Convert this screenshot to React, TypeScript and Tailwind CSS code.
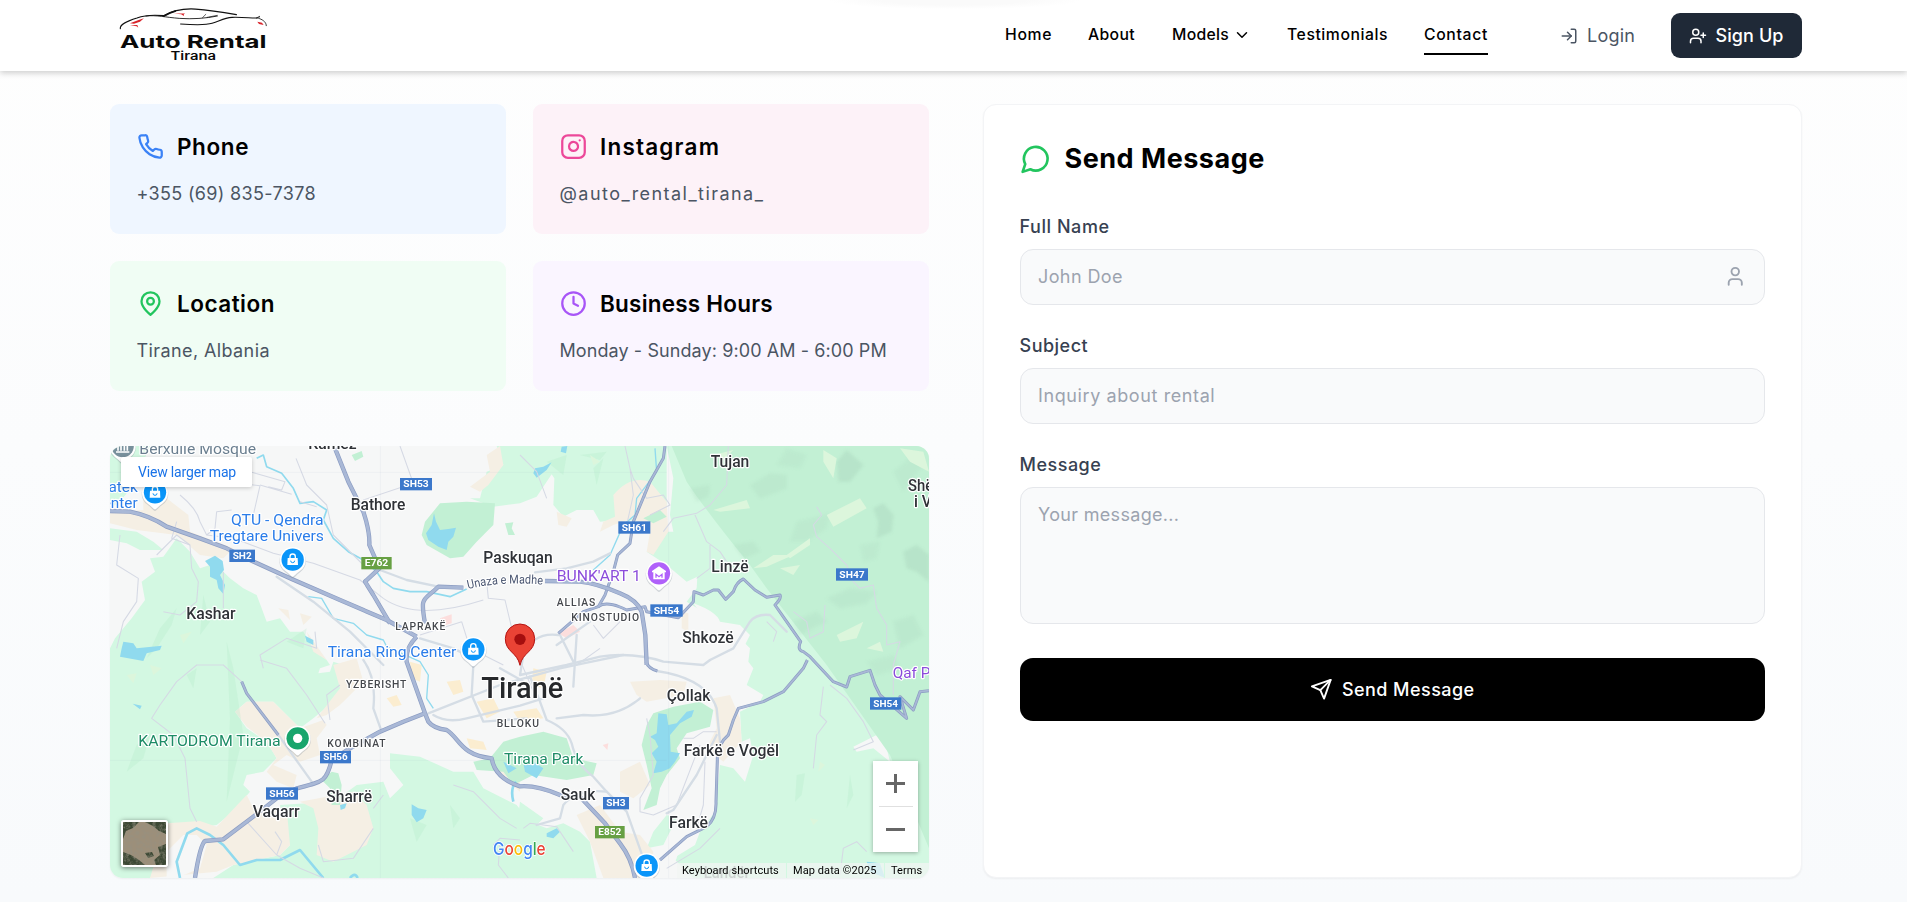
import React from "react";
import { ChevronDown, Clock, Instagram, LogIn, User, UserPlus } from "lucide-react";

type IconProps = { className?: string };

const Stroke = ({ className, children }: IconProps & { children: React.ReactNode }) => (
  <svg viewBox="0 0 24 24" fill="none" stroke="currentColor" strokeWidth="2" strokeLinecap="round" strokeLinejoin="round" className={className}>
    {children}
  </svg>
);

const PhoneIcon = ({ className }: IconProps) => (
  <Stroke className={className}>
    <path d="M22 16.92v3a2 2 0 0 1-2.18 2 19.79 19.79 0 0 1-8.63-3.07 19.5 19.5 0 0 1-6-6 19.79 19.79 0 0 1-3.07-8.67A2 2 0 0 1 4.11 2h3a2 2 0 0 1 2 1.72 12.84 12.84 0 0 0 .7 2.81 2 2 0 0 1-.45 2.11L8.09 9.91a16 16 0 0 0 6 6l1.27-1.27a2 2 0 0 1 2.11-.45 12.84 12.84 0 0 0 2.81.7A2 2 0 0 1 22 16.92z" />
  </Stroke>
);
const PinIcon = ({ className }: IconProps) => (
  <Stroke className={className}>
    <path d="M20 10c0 6-8 12-8 12s-8-6-8-12a8 8 0 0 1 16 0Z" />
    <circle cx="12" cy="10" r="3" />
  </Stroke>
);
const ChatIcon = ({ className }: IconProps) => (
  <Stroke className={className}>
    <path d="M7.9 20A9 9 0 1 0 4 16.1L2 22Z" />
  </Stroke>
);
const SendIcon = ({ className }: IconProps) => (
  <Stroke className={className}>
    <path d="m22 2-7 20-4-9-9-4Z" />
    <path d="M22 2 11 13" />
  </Stroke>
);

const Logo = () => (
  <svg viewBox="0 0 400 180" className="h-[60px] w-[133px] shrink-0 self-start overflow-visible">
    <g transform="translate(-90 0)" fill="none" stroke="#111" strokeLinecap="round">
      <path d="M91 86c-2-14 22-23 50-32 22-8 40-11 80-7" strokeWidth="3.5" />
      <path d="M168 48c30-4 60 4 100 7 40 3 80 0 115-7" strokeWidth="2.6" />
      <path d="M222 47c30-18 60-22 95-20 45 3 85 10 123 17" strokeWidth="3.8" />
      <path d="M222 48c12-7 22-12 34-15" strokeWidth="5.5" />
      <path d="M272 72c45 3 75 4 95-2 25-8 35-17 60-18 35-1 60 3 82 2" strokeWidth="3.2" />
      <path d="M338 53l10-10M352 52l30-6" strokeWidth="2" />
      <path d="M500 54l10-5M510 56c12 4 20 12 20 21" strokeWidth="2.5" />
    </g>
    <g transform="translate(-90 0)" fill="#d8232a">
      <path d="M120 70l26-10 16-5-12 10-18 6z" />
      <path d="M120 76l22-1 3 8-5-4z" />
      <path d="M252 40l34 0-4 3 0 5-8-5z" />
      <path d="M503 65l14 3 5 7-14-3z" />
    </g>
    <text x="0" y="144" textLength="441" lengthAdjust="spacingAndGlyphs" fontFamily="Inter, sans-serif" fontWeight="700" fontSize="54" fill="#0a0a0a">Auto Rental</text>
    <text x="152" y="180" textLength="137" lengthAdjust="spacingAndGlyphs" fontFamily="Inter, sans-serif" fontWeight="600" fontSize="34" fill="#0a0a0a">Tirana</text>
  </svg>
);

const majorRoads = [
  "M30 228L90 230Q150 242 200 275L300 310L380 340L450 375L575 432L720 495L860 555L950 605",
  "M705 40L745 140L790 230Q810 290 808 330L832 385L838 400L795 440L820 480L870 565",
  "M950 605Q915 640 920 680L975 835L985 860Q1000 880 1040 885C1080 910 1080 960 1175 970Q1185 1030 1260 1054Q1310 1050 1380 1080L1440 1085L1515 1165L1560 1225Q1595 1270 1605 1329",
  "M975 835L910 860L840 890L750 940L695 975C680 1040 670 1040 590 1060L530 1090L460 1145L370 1213L315 1218Q300 1230 285 1329",
  "M975 565C960 480 970 500 1015 455L1090 458M1335 438L1440 440Q1490 445 1560 475Q1610 495 1625 530L1636 600L1640 690",
];
const midRoads = [
  "M1695 33L1690 70L1650 140L1600 260L1590 325L1553 360L1540 410L1515 480L1495 515L1450 530L1375 595",
  "M1495 515Q1520 495 1580 525L1635 515L1640 530L1735 548L1780 500L1782 470L1810 480L1840 465L1855 465L1877 493L1900 470Q1910 440 1930 432L1965 465L2000 487L2040 480Q2045 490 2025 510L2060 560L2102 620Q2090 645 2110 650L2130 665L2200 740L2240 756L2250 725L2310 706L2325 750L2340 780L2420 850L2400 785L2440 825L2460 770L2487 767",
  "M1680 1275L1760 1205L1820 1175Q1850 1150 1848 1100L1852 975Q1850 930 1885 900L1900 855L1915 820L1990 800L2050 770L2110 700L2122 675",
  "M425 740L440 775L535 900",
  "M1638 680Q1645 700 1672 708",
];
const arterials = [
  "M1670 708Q1820 730 1850 820L1860 920",
  "M985 835L1200 750L1290 725L1320 800L1340 855Q1400 880 1415 925Q1430 990 1480 1025L1520 1070L1580 1130L1630 1270",
  "M1000 840Q1040 865 1100 850L1260 812L1330 790",
  "M1375 600Q1300 590 1270 660L1260 720L1400 690L1500 665Q1600 650 1690 680L1810 690L1830 675",
  "M1290 725L1380 700L1450 685L1570 660M1380 600L1425 690M1430 600L1420 755M1370 630L1470 560",
  "M1120 690L1115 780L1150 860L1280 850M1200 700L1280 745",
  "M790 675Q830 730 820 820L845 890",
  "M840 405L920 435L1015 455M535 900L635 1040",
  "M1305 412L1400 400L1480 380L1530 355",
  "M530 425L640 500L750 590L850 690",
  "M1620 790Q1550 850 1450 840L1370 850M1520 1070Q1430 1060 1390 1110L1380 1150L1310 1170M960 610L1060 640L1120 670",
  "M1700 1135L1720 1125L1790 1020L1850 900M1830 675L1900 640L1950 560Q1970 535 2010 540L2060 590",
];
const minorRoads = [
  "M588 70L620 150L680 210L700 300L790 390M380 140L480 152L460 240",
  "M790 195L940 145L900 33M480 150L575 178M600 200L650 215M450 110L555 140L545 165L505 155",
  "M240 180Q290 220 300 260L320 300L345 280L350 230L395 225M320 300L400 310L520 355L640 385L780 435L850 490Q950 560 1150 495",
  "M60 300L50 390L115 430L110 500L70 560L50 640M170 360L230 300L270 330L275 400L295 440L290 500L240 540L190 530",
  "M370 410L370 520M230 260L215 310L270 330M645 590L650 640L560 610L480 660L490 700",
  "M425 740L370 690L290 690L230 740L180 810L155 850L220 900L255 970L270 1120L290 1160",
  "M480 675L560 700L620 780L675 865M690 855L680 780L720 750",
  "M440 1160L530 1260L600 1300L670 1329M525 1190L545 1220L530 1260M820 1180L760 1270L670 1280L655 1230",
  "M1160 440L1165 490L1215 495L1240 600M1085 560L1110 640L1210 690M960 600L1085 560",
  "M1575 33L1590 100L1600 180L1580 270M1590 100L1600 130L1640 190L1690 180L1710 210L1650 240",
  "M1885 33L1880 150L1830 210L1790 235L1720 250L1690 290M1785 240L1820 320L1860 350L1900 410M1260 60L1310 110L1340 190M1830 330L1830 400L1790 430",
  "M1500 640L1430 690M1480 570L1510 610L1570 550M1260 675L1300 770M1060 1050L1120 1070L1200 1150L1250 1180",
  "M1750 910L1780 910L1810 890L1850 890M1800 930L1780 980L1730 1110L1660 1140L1620 1130L1620 1090L1660 1020L1650 900L1640 850",
  "M1815 980L1810 1110L1790 1180M1860 1180L1800 1240L1700 1300M2000 560L2030 590L2020 620M2130 610L2120 560L2080 530M2130 610L2170 590L2175 510",
  "M2150 215L2165 240L2140 270L2150 305L2190 340L2240 390L2260 440L2280 460L2320 450L2330 520L2360 570L2360 630L2400 620L2380 690L2380 780",
  "M2170 755L2160 840L2180 860L2150 900L2140 1000M2190 750L2240 790L2290 860L2320 920L2260 945M2220 1320L2230 1240L2270 1220L2300 1250",
  "M1270 1180L1290 1165L1370 1175L1420 1250M1200 1220L1195 1290L1225 1329M1180 1230L1200 1210L1260 1215M850 1080L820 1120",
];

const textHalo = { paintOrder: "stroke" as const, stroke: "#ffffff", strokeWidth: 7, strokeLinejoin: "round" as const };

type Place = [string, number, number, number];
const towns: Place[] = [
  ["Kamëz", 625, 41, 145], ["Bathore", 752, 226, 164], ["Kashar", 259, 553, 148], ["Paskuqan", 1150, 384, 208],
  ["Tujan", 1832, 95, 116], ["Linzë", 1834, 410, 112], ["Shkozë", 1747, 623, 154], ["Shënmëri", 2424, 168, 190],
  ["i Vogël", 2442, 215, 140], ["Çollak", 1700, 798, 131], ["Farkë e Vogël", 1751, 962, 286], ["Farkë", 1707, 1179, 117],
  ["Sauk", 1382, 1094, 104], ["Sharrë", 679, 1102, 137], ["Vaqarr", 458, 1145, 141],
];
const quarters: Place[] = [
  ["LAPRAKË", 886, 584, 150], ["ALLIAS", 1370, 513, 116], ["KINOSTUDIO", 1414, 559, 203],
  ["YZBERISHT", 738, 759, 181], ["KOMBINAT", 682, 935, 175], ["BLLOKU", 1190, 877, 127],
];
const shields: [string, number, number, number, string][] = [
  ["SH53", 900, 129, 96, "#3b78cb"], ["SH2", 388, 344, 77, "#3b78cb"], ["E762", 784, 366, 91, "#67a043"],
  ["SH61", 1555, 259, 96, "#3b78cb"], ["SH47", 2208, 400, 96, "#3b78cb"], ["SH54", 1651, 508, 97, "#3b78cb"],
  ["SH54", 2310, 787, 94, "#3b78cb"], ["SH56", 660, 948, 93, "#3b78cb"], ["SH56", 498, 1057, 96, "#3b78cb"],
  ["SH3", 1509, 1086, 78, "#3b78cb"], ["E852", 1485, 1173, 89, "#67a043"],
];
const shops: [number, number][] = [[165, 172], [578, 374], [1120, 643], [1640, 1292]];

const Teardrop = ({ x, y, color, children }: { x: number; y: number; color: string; children?: React.ReactNode }) => (
  <g transform={`translate(${x} ${y})`}>
    <path d="M0 53C-5 53-11 42-24 33A40 40 0 1 1 24 33C11 42 5 53 0 53Z" fill="#8a94a0" opacity=".35" transform="translate(0 3)" />
    <path d="M0 51C-5 51-11 41-24 32A39 39 0 1 1 24 32C11 41 5 51 0 51Z" fill="#fff" />
    <circle r="33.5" fill={color} />
    {children}
  </g>
);

const MapDrawing = () => (
  <svg viewBox="30 33 2457 1296" className="block h-full w-full" fontFamily="Roboto, sans-serif">
    <rect x="0" y="0" width="2500" height="1340" fill="#f6f7f7" />
    <g fill="#d3f8e2">
      <path d="M30 640L45 610L95 550L135 495L125 440L165 410L150 370L190 365L230 310L270 350L300 400L330 390L370 410L390 430L430 460L470 480L485 520L500 560L540 550L570 590L610 590L640 640L680 675L690 690L660 700L655 715L690 710L700 680L760 700L770 740L700 800L640 850L600 880L520 800L440 800L405 830L440 880L500 920L530 970L490 1010L440 1020L430 1050L450 1070L400 1130L350 1170L290 1180L150 1329L30 1329Z" />
      <path d="M30 33H150L100 150L60 200L30 220ZM30 280L110 290L160 320L190 345L120 345L80 325L30 315Z" />
      <path d="M1190 33L1210 90L1160 110L1140 190L1110 190L1180 215L1260 205L1310 185L1355 118L1363 130L1360 210L1390 245L1430 225L1480 225L1500 260L1560 255L1700 260L1700 33Z" />
      <path d="M1700 33L1720 130L1710 240L1720 290L1690 290L1640 350L1700 390L1760 440L1792 425L1790 460L1760 500L1850 555L1860 600L1930 620L1950 640L1945 680L1960 700L1940 750L1990 780L1980 800L1920 830L1925 920L1950 910L1960 960L1935 1040L1900 1000L1860 990L1845 1130L1800 1190L1785 1230L1720 1270L1780 1329H2487V33Z" />
      <path d="M870 955L960 965L1060 1010L1120 1010L1150 1060L1250 1110L1290 1160L1340 1180L1390 1165L1440 1190L1470 1220L1490 1329L340 1329L400 1290L540 1260L570 1230L550 1170L540 1110L620 1105L660 1130L770 1050L850 1040L870 1090L910 1050L870 1000Z" />
      <path d="M1660 1190L1700 1140L1730 1150L1690 1230L1640 1240ZM1260 1100L1330 1150L1290 1190L1250 1180Z" />
    </g>
    <path d="M1780 505Q1850 530 1860 560L1920 570L1950 600L1930 640L1860 610L1820 560ZM2260 935L2330 900L2360 940L2370 980L2320 940L2270 950ZM1680 1240L1740 1225L1730 1270L1700 1329H1650Z" fill="#f6f7f7" />
    <g fill="#f5efe4">
      <path d="M130 150L200 190L265 240L270 290L400 340L370 370L300 360L230 300L110 285L30 265L30 235L130 225Z" />
      <path d="M520 800L440 800L405 830L440 875L500 920L530 970L500 1010L530 1040L580 1060L590 1020L520 990L560 960L600 980L660 960L650 910L680 870L670 855L600 880Z" />
      <path d="M200 1165L300 1158L350 1175L440 1080L460 1120L560 1120L570 1230L540 1260L400 1290L350 1310L150 1329Z" />
      <path d="M600 1100L760 1070L800 1110L820 1180L800 1230L700 1280L650 1260L655 1180L640 1120Z" />
      <path d="M1540 180Q1590 120 1650 140L1700 200L1705 290L1660 360L1640 350L1650 290L1600 250L1540 270L1500 290L1510 260L1545 245ZM1370 230L1415 250L1400 275L1375 270Z" />
      <path d="M1110 155L1170 110L1160 60L1200 33L1210 90L1165 150L1140 170ZM535 520L565 525L570 555ZM600 535L635 545L610 570ZM620 590L680 675L640 650Z" />
      <path d="M1590 740L1680 735L1760 740L1750 780L1640 800L1610 780ZM1840 790L1890 780L1920 850L1925 920L1870 980L1820 940L1850 880Z" />
      <path d="M1560 1010L1620 980L1650 1050L1600 1090L1560 1070ZM1430 1140L1500 1110L1560 1190L1620 1200L1660 1250L1650 1329H1510L1470 1220ZM1745 530L1765 535L1765 590L1745 580Z" />
      <path d="M700 690L770 670L790 740L720 810L680 840L650 850L720 760ZM1180 960L1260 1000L1260 1070L1200 1020Z" />
    </g>
    <path d="M200 1250L250 1200L290 1200L320 1230L300 1300L230 1329H200Z" fill="#f6f7f7" />
    <g fill="#fbedd0">
      <path d="M1040 740L1080 735L1090 770L1060 780ZM1130 800L1180 790L1200 830L1160 850ZM1100 910L1150 920L1160 945L1110 940ZM1300 700L1340 710L1330 760L1295 750ZM860 790L890 780L905 810L880 815ZM930 680L965 690L960 740L935 730ZM1240 830L1310 820L1330 850L1260 860Z" />
    </g>
    <g fill="#fcdedd">
      <path d="M1020 550L1055 538L1055 565L1030 572ZM1375 595L1420 570L1440 590L1400 610ZM1508 930L1525 925L1522 945Z" />
    </g>
    <g fill="#c2f0d4">
      <path d="M1715 33L1760 140Q1820 230 1950 390L2000 460L2180 690L2370 960L2487 1240V33Z" />
      <path d="M975 260L1020 205L1100 200L1185 205L1180 270L1130 320L1090 365L1050 370L980 330L965 300ZM755 60L785 48L790 65L765 78ZM1215 265L1240 262L1235 280L1245 300L1225 300Z" />
      <path d="M1660 835L1720 815L1800 800L1840 825L1830 875L1760 895L1730 940L1740 970L1700 1020L1680 1060L1670 1110L1630 1125L1655 1060L1640 990L1625 930L1640 870Z" />
      <path d="M1120 980L1170 970L1210 920L1260 905L1330 890L1400 910L1420 970L1490 985L1480 1020L1400 1035L1300 1020L1240 1050L1210 1010L1130 1005Z" />
      <path d="M665 1035L695 1010L715 1015L725 1050L720 1110L695 1110L690 1060ZM1630 250L1680 225L1700 245L1660 265Z" />
    </g>
    <g fill="#b0dcc3" opacity=".6" style={{ filter: "blur(4px)" }}>
      <path d="M2210 80L2240 45L2290 90L2250 140L2215 140ZM2320 220L2350 205L2380 240L2375 290L2330 310L2335 260ZM2410 350L2450 330L2487 360L2487 440L2450 410L2420 400Z" />
      <path d="M1900 330L1960 320L1980 350L1930 370ZM1770 160L1830 150L1825 185L1790 200ZM1950 150L2010 115L2060 120L2060 160L1980 190Z" opacity=".55" />
      <path d="M2080 560L2150 530L2180 560L2100 600ZM2180 490L2250 460L2330 470L2300 505L2220 520ZM2380 560L2440 540L2470 600L2400 640Z" opacity=".5" />
      <path d="M2090 260L2190 235L2180 280L2120 320L2070 320ZM2060 40L2120 60L2100 100L2030 90ZM2300 680L2380 660L2400 700L2330 720ZM2380 110L2440 60L2470 90L2410 170ZM2280 330L2340 320L2330 370L2290 380Z" opacity=".4" />
    </g>
    <g fill="#aee8c6" opacity=".26">
      <path d="M230 520L215 570L170 640L140 670L180 580ZM380 620L400 700L430 900L405 1000L380 1100L390 850ZM150 900L130 970L80 1010L110 930ZM310 480L330 560L300 600ZM560 620L620 580L610 640ZM260 720L290 700L280 760Z" />
      <path d="M1340 80L1400 60L1390 120ZM1480 100L1510 70L1490 150ZM2090 1020L2115 1015L2105 1080L2085 1100ZM2250 1020L2260 1080L2240 1120ZM1440 60L1520 50L1500 75ZM930 1150L980 1170L950 1220ZM1050 1110L1080 1150L1060 1180Z" />
    </g>
    <g fill="#dcf6dc" style={{ filter: "blur(1px)" }}>
      <path d="M2170 45L2210 70L2200 130L2170 80ZM1840 225L1940 195L1950 220L1860 230ZM1960 400L2020 360L2080 360L2000 395ZM2180 240L2280 190L2300 220L2200 275ZM2060 360L2130 310L2130 330L2070 370ZM2210 600L2290 560L2270 610L2220 620ZM1840 60L1900 45L1870 75ZM2300 640L2340 620L2350 650ZM2400 40L2470 50L2487 110L2430 80ZM2040 400L2100 390L2080 420Z" />
      <path d="M150 690L185 700L160 720ZM80 720L110 715L100 745ZM2130 1150L2155 1155L2140 1170ZM2160 980L2175 990L2155 1010ZM1470 60L1500 80L1480 90ZM240 600L275 590L250 625Z" />
    </g>
    <g fill="#90daee">
      <path d="M1002 235L1008 260L1020 285L1045 282L1068 278L1060 305L1045 320L1040 345L1015 335L985 315L978 295L995 270Z" />
      <path d="M315 378L345 362L368 378L372 405L360 420L375 450L370 477L355 460L350 435L330 425L330 395Z" />
      <path d="M70 620L100 625L110 640L185 632L180 645L140 655L130 678L60 665L65 640ZM615 602L640 615L640 630L620 620ZM98 806L125 812L120 823Z" />
      <path d="M1305 100L1330 95L1355 82L1340 105L1310 128L1300 115ZM1385 35L1402 33L1398 55L1382 50Z" />
      <path d="M1675 835L1700 838L1705 870L1730 865L1760 830L1782 825L1775 845L1740 865L1710 900L1712 950L1740 955L1725 980L1710 1000L1685 1010L1660 1015L1670 980L1655 955L1675 935L1665 915L1650 905L1670 895Z" />
      <path d="M935 1108L955 1120L980 1125L970 1150L950 1162L935 1140ZM720 1110L740 1105L735 1120L722 1125ZM1340 1195L1370 1180L1380 1190L1360 1210L1340 1205ZM1270 985L1300 980L1330 1000L1310 1030L1275 1010ZM1210 980L1250 1000L1225 1015ZM2300 1280L2340 1285L2355 1329L2310 1310Z" />
    </g>
    <g fill="none" stroke="#90daee" strokeLinejoin="round">
      <path d="M470 70L490 60L500 95L545 115L580 160L600 205L640 200L680 225L670 255L700 310L745 350L790 375L830 410L850 440L880 460L930 470L980 470L1050 485L1100 462" strokeWidth="5" />
      <path d="M625 485L665 490L700 550L760 565L800 600L850 615L860 635L960 680L985 720L980 790L1000 820" strokeWidth="4" />
      <path d="M1665 40L1670 110L1610 190L1605 240L1570 270L1530 360L1480 405" strokeWidth="4" />
      <path d="M240 1329L230 1280L262 1195L290 1180L330 1200L370 1230L420 1290L470 1275L540 1275L600 1245L670 1329" strokeWidth="8" />
      <path d="M750 1329Q765 1310 773 1329M1248 1040Q1230 1060 1240 1100" strokeWidth="8" />
    </g>
    <g fill="none" stroke="#d5d9e4" strokeWidth="3.2" strokeLinejoin="round">
      {minorRoads.map((d) => <path key={d} d={d} />)}
    </g>
    <g fill="none" stroke="#d5dde5" strokeWidth="7" strokeLinejoin="round" strokeLinecap="round">
      {arterials.map((d) => <path key={d} d={d} />)}
    </g>
    <g fill="none" stroke="#8b9cc2" strokeWidth="9" strokeLinejoin="round">
      {midRoads.map((d) => <path key={d} d={d} />)}
    </g>
    <g fill="none" stroke="#a9b8d6" strokeWidth="5" strokeLinejoin="round">
      {midRoads.map((d) => <path key={d} d={d} />)}
    </g>
    <g fill="none" stroke="#8b9cc2" strokeWidth="13" strokeLinejoin="round">
      {majorRoads.map((d) => <path key={d} d={d} />)}
    </g>
    <g fill="none" stroke="#a9b8d6" strokeWidth="9" strokeLinejoin="round">
      {majorRoads.map((d) => <path key={d} d={d} />)}
    </g>
    <g stroke="#7f8fa8" strokeOpacity=".06" strokeWidth="3">
      <path d="M841 33V1329M1706 33V1329M30 112H1700M30 976H1700" />
    </g>

    {shields.map(([label, x, y, w, color]) => (
      <g key={label + x}>
        <rect x={x} y={y} width={w} height="37" fill={color} />
        <text x={x + 10} y={y + 28} textLength={w - 20} lengthAdjust="spacingAndGlyphs" fontSize="28" fontWeight="700" fill="#fff">{label}</text>
      </g>
    ))}
    <g fontSize="47" fontWeight="500" fill="#2f3237" style={textHalo}>
      {towns.map(([label, x, y, w]) => (
        <text key={label} x={x} y={y} textLength={w} lengthAdjust="spacingAndGlyphs">{label}</text>
      ))}
    </g>
    <g fontSize="31" fontWeight="500" fill="#45484d" style={textHalo}>
      {quarters.map(([label, x, y, w]) => (
        <text key={label} x={x} y={y} textLength={w} lengthAdjust="spacing">{label}</text>
      ))}
    </g>
    <path id="ring-road" d="M1104 462Q1200 438 1332 449" fill="none" />
    <text fontSize="37" fill="#4a5671" style={textHalo}>
      <textPath href="#ring-road" textLength="226" lengthAdjust="spacingAndGlyphs">Unaza e Madhe</textPath>
    </text>
    <text x="1811" y="1329" fontSize="47" fontWeight="500" fill="#666a6f" textLength="138" lengthAdjust="spacingAndGlyphs">Lundër</text>

    <g fontSize="46" fill="#2b7de9" style={textHalo}>
      <text x="393" y="271" textLength="278" lengthAdjust="spacingAndGlyphs">QTU - Qendra</text>
      <text x="329" y="317" textLength="343" lengthAdjust="spacingAndGlyphs">Tregtare Univers</text>
      <text x="683" y="667" textLength="386" lengthAdjust="spacingAndGlyphs">Tirana Ring Center</text>
      <text x="113" y="172" textAnchor="end">Jysk Patek</text>
      <text x="113" y="220" textAnchor="end">Center</text>
    </g>
    <g fontSize="46" style={textHalo}>
      <text x="118" y="57" textLength="350" lengthAdjust="spacingAndGlyphs" fill="#6b7f90">Berxulle Mosque</text>
      <text x="1370" y="438" textLength="253" lengthAdjust="spacingAndGlyphs" fill="#8b4cdb">BUNK'ART 1</text>
      <text x="2378" y="730" fill="#8b4cdb">Qaf Priska</text>
      <text x="115" y="933" textLength="427" lengthAdjust="spacingAndGlyphs" fill="#1d8c66">KARTODROM Tirana</text>
      <text x="1212" y="986" textLength="238" lengthAdjust="spacingAndGlyphs" fill="#1d8c66">Tirana Park</text>
    </g>
    <text x="1144" y="789" fontSize="86" fontWeight="500" fill="#26282b" textLength="246" lengthAdjust="spacingAndGlyphs" style={textHalo}>Tiranë</text>

    <Teardrop x={68} y={33} color="#78909c">
      <path d="M-20 18H20M-14 -6V14M-5 -6V14M5 -6V14M14 -6V14" stroke="#fff" strokeWidth="5" />
    </Teardrop>
    {shops.map(([x, y]) => (
      <Teardrop key={x} x={x} y={y} color="#0a95f9">
        <path d="M-15-5H15L16 16H-16Z" fill="#fff" />
        <path d="M-8-4V-9a8 8 0 0 1 16 0V-4" fill="none" stroke="#fff" strokeWidth="4" />
        <path d="M-6 3a6 6 0 0 0 12 0" fill="none" stroke="#0a95f9" strokeWidth="3" />
      </Teardrop>
    ))}
    <Teardrop x={1677} y={415} color="#b061fa">
      <path d="M-21-7L0-21L21-7V-3H-21ZM-17-3H17V18H-17Z" fill="#fff" />
      <path d="M-9 13V3L0 10L9 3V13" fill="none" stroke="#b061fa" strokeWidth="4" />
    </Teardrop>
    <Teardrop x={593} y={910} color="#18a56c">
      <circle r="14" fill="#fff" />
    </Teardrop>

    <g transform="translate(1260 1)">
      <path d="M0 690C-8 650-44 650-44 610A44 44 0 1 1 44 610C44 650 8 650 0 690Z" fill="#ea4335" stroke="#b31412" strokeWidth="3" />
      <circle cy="612" r="17" fill="#a50e0e" />
    </g>

    <text x="1179" y="1261" fontSize="53" fontWeight="500" fontFamily="Inter, sans-serif" textLength="158" lengthAdjust="spacingAndGlyphs" style={{ ...textHalo, strokeWidth: 5 }}>
      <tspan fill="#4285f4">G</tspan><tspan fill="#ea4335">o</tspan><tspan fill="#fbbc04">o</tspan><tspan fill="#4285f4">g</tspan><tspan fill="#34a853">l</tspan><tspan fill="#ea4335">e</tspan>
    </text>
  </svg>
);

const SatelliteThumb = () => (
  <svg viewBox="0 0 43 43" className="block h-full w-full">
    <defs>
      <filter id="grain" x="0" y="0" width="100%" height="100%">
        <feTurbulence type="fractalNoise" baseFrequency=".3" numOctaves="4" seed="4" />
        <feColorMatrix values="0 0 0 0 .3  0 0 0 0 .28  0 0 0 0 .22  1.6 0 0 0 -.65" />
      </filter>
    </defs>
    <rect width="43" height="43" fill="#9c8f7a" />
    <path d="M0 0H16L10 6L3 9L0 17ZM22 0H43V12L36 9L30 4ZM0 30L8 33L16 38L22 43H0ZM22 31L29 30L31 34L25 36ZM35 25L43 22V43H33L31 38L37 33Z" fill="#3c4834" />
    <rect width="43" height="43" filter="url(#grain)" />
  </svg>
);

const MapWidget = () => (
  <div className="relative h-[432px] overflow-hidden rounded-[13px] shadow-[0_1px_2px_rgba(0,0,0,0.05)]">
    <MapDrawing />
    <a className="absolute left-[11px] top-[11px] flex h-[30px] w-[131px] items-center justify-center rounded-[2px] bg-white pl-px font-['Roboto',sans-serif] text-[14px] tracking-[-0.17px] text-[#1a73e8] shadow-[0_1px_4px_rgba(0,0,0,0.2)]">
      View larger map
    </a>
    <div className="absolute bottom-[11px] left-[11px] h-[47px] w-[47px] overflow-hidden rounded-[3px] border-2 border-white shadow-[0_1px_5px_rgba(0,0,0,0.5)]">
      <SatelliteThumb />
    </div>
    <div className="absolute bottom-[26px] right-[11px] flex h-[91px] w-[45px] flex-col items-center justify-between bg-white shadow-[0_1px_4px_rgba(0,0,0,0.3)]">
      <svg viewBox="0 0 45 45" className="h-[45px] w-[45px]"><path d="M22.5 13v19M13 22.5h19" stroke="#666" strokeWidth="3" /></svg>
      <span className="h-px w-[34px] bg-[#e0e0e0]" />
      <svg viewBox="0 0 45 45" className="h-[45px] w-[45px]"><path d="M13 22.5h19" stroke="#666" strokeWidth="3" /></svg>
    </div>
    <div className="absolute bottom-0 right-0 flex h-[15px] items-center bg-[#f1f5f3]/75 font-['Roboto',sans-serif] text-[11px] leading-none tracking-[0.08px] text-black">
      <span className="w-[109px] whitespace-nowrap pl-[5px]">Keyboard shortcuts</span>
      <span className="h-[15px] w-[98px] whitespace-nowrap border-l border-[#d3f8e2] pl-[6px] leading-[15px]">Map data ©2025</span>
      <span className="h-[15px] w-[45px] border-l border-[#d3f8e2] pl-[6px] leading-[15px]">Terms</span>
    </div>
  </div>
);

type ContactCard = { title: string; text: string; bg: string; icon: React.ReactNode; titleTrack: string; textTrack: string };

const contactCards: ContactCard[] = [
  { title: "Phone", text: "+355 (69) 835-7378", bg: "bg-[#eff6ff]", icon: <PhoneIcon className="size-[27px] text-[#3b82f6]" />, titleTrack: "tracking-[0.6px]", textTrack: "tracking-[0.33px]" },
  { title: "Instagram", text: "@auto_rental_tirana_", bg: "bg-[#fdf2f8]", icon: <Instagram className="size-[27px] text-[#ec4899]" />, titleTrack: "tracking-[1.2px]", textTrack: "tracking-[1.45px]" },
  { title: "Location", text: "Tirane, Albania", bg: "bg-[#f0fdf4]", icon: <PinIcon className="size-[27px] text-[#22c55e]" />, titleTrack: "tracking-[0.5px]", textTrack: "tracking-[0.4px]" },
  { title: "Business Hours", text: "Monday - Sunday: 9:00 AM - 6:00 PM", bg: "bg-[#faf5ff]", icon: <Clock className="size-[27px] text-[#a855f7]" />, titleTrack: "tracking-[0.22px]", textTrack: "tracking-[0.09px]" },
];

const Header = () => (
  <header className="relative z-10 flex h-[71px] items-center justify-between bg-white pl-[120px] pr-[105px] shadow-[0_2px_6px_rgba(0,0,0,0.2)]">
    <span className="absolute left-[830px] top-0 h-[9px] w-[250px] bg-[radial-gradient(ellipse_at_top,#fafafa_40%,#ffffff_72%)]" />
    <Logo />
    <div className="flex items-center text-[15.75px] font-medium text-black">
      <nav className="flex items-center gap-[36px]">
        <a className="-ml-px -mt-[2px] w-[48px] whitespace-nowrap tracking-[0.65px]">Home</a>
        <a className="-ml-px -mt-[2px] w-[48px] whitespace-nowrap tracking-[0.35px]">About</a>
        <a className="-mt-[2px] flex w-[79px] items-center justify-between whitespace-nowrap tracking-[0.3px]">Models <ChevronDown className="mt-px size-[18px]" /></a>
        <a className="-mt-[2px] w-[101px] whitespace-nowrap tracking-[0.55px]">Testimonials</a>
        <a className="flex h-[39px] w-[64px] items-center whitespace-nowrap border-b-2 border-b-black tracking-[0.65px]">Contact</a>
      </nav>
      <a className="ml-[72px] flex w-[75px] items-center gap-[9px] text-[18px] font-normal tracking-[0.25px] text-[#4b5563]">
        <LogIn className="size-[18px] shrink-0" />Login
      </a>
      <a className="ml-[36px] flex h-[45px] w-[131px] items-center gap-[9px] rounded-[9px] bg-[#1f2937] pl-[17.5px] text-[18px] tracking-[0.1px] text-white">
        <UserPlus className="size-[18px] shrink-0" /><span className="whitespace-nowrap">Sign Up</span>
      </a>
    </div>
  </header>
);

const fieldClass = "block w-full rounded-[13px] border border-[#e5e7eb] bg-[#f9fafb] px-[17px] text-[18px] placeholder-[#9ca3af] outline-none";

const MessageForm = () => (
  <section className="h-[774px] rounded-[13px] border border-[#f3f4f6] bg-white px-[36px] py-[36px] shadow-[0_1px_2px_rgba(0,0,0,0.05)]">
    <h2 className="flex h-[36px] items-center gap-[13px] text-[27px] font-bold tracking-[0.5px] text-black">
      <ChatIcon className="size-[31.5px] text-[#22c55e]" />Send Message
    </h2>
    <form className="mt-[36px] flex flex-col gap-[27px] text-[18px] text-[#374151]">
      <label className="flex flex-col gap-[9px]">
        <span className="-ml-[0.5px] h-[27px] font-medium leading-[27px] tracking-[0.55px]">Full Name</span>
        <span className="relative block">
          <input className={`${fieldClass} h-[56px] pb-[2px] tracking-[0.4px]`} placeholder="John Doe" />
          <User className="absolute right-[19px] top-[16px] size-[22.5px] text-[#9ca3af]" />
        </span>
      </label>
      <label className="flex flex-col gap-[9px]">
        <span className="-ml-[0.5px] h-[27px] font-medium leading-[27px] tracking-[0.5px]">Subject</span>
        <input className={`${fieldClass} h-[56px] pb-[2px] tracking-[0.6px]`} placeholder="Inquiry about rental" />
      </label>
      <label className="flex flex-col gap-[9px]">
        <span className="-ml-[0.5px] h-[27px] font-medium leading-[27px] tracking-[0.5px]">Message</span>
        <textarea className={`${fieldClass} h-[137px] resize-none py-[12.5px] leading-[27px] tracking-[0.32px]`} placeholder="Your message..." />
      </label>
      <button type="button" className="mt-[7px] flex h-[63px] items-center justify-center gap-[9px] rounded-[13px] bg-black font-medium tracking-[0.45px] text-white">
        <SendIcon className="size-[22.5px]" />Send Message
      </button>
    </form>
  </section>
);

export default function App() {
  return (
    <div className="h-[902px] overflow-hidden bg-gradient-to-b from-[#fefefe] to-[#f8fafc] font-['Inter',sans-serif] antialiased">
      <Header />
      <main className="grid grid-cols-2 gap-[54px] pl-[110px] pr-[105px] pt-[33px]">
        <div className="flex flex-col gap-[54px]">
          <div className="grid grid-cols-2 gap-[27px] pb-px">
            {contactCards.map((card) => (
              <article key={card.title} className={`${card.bg} h-[130px] rounded-[9px] px-[26.5px] pt-[27px]`}>
                <h3 className={`${card.titleTrack} mb-[17.5px] flex h-[31px] items-center gap-[13.5px] text-[22.5px] font-semibold text-black`}>
                  {card.icon}{card.title}
                </h3>
                <p className={`${card.textTrack} whitespace-nowrap text-[18px] leading-[27px] text-[#4b5563]`}>{card.text}</p>
              </article>
            ))}
          </div>
          <MapWidget />
        </div>
        <MessageForm />
      </main>
    </div>
  );
}
